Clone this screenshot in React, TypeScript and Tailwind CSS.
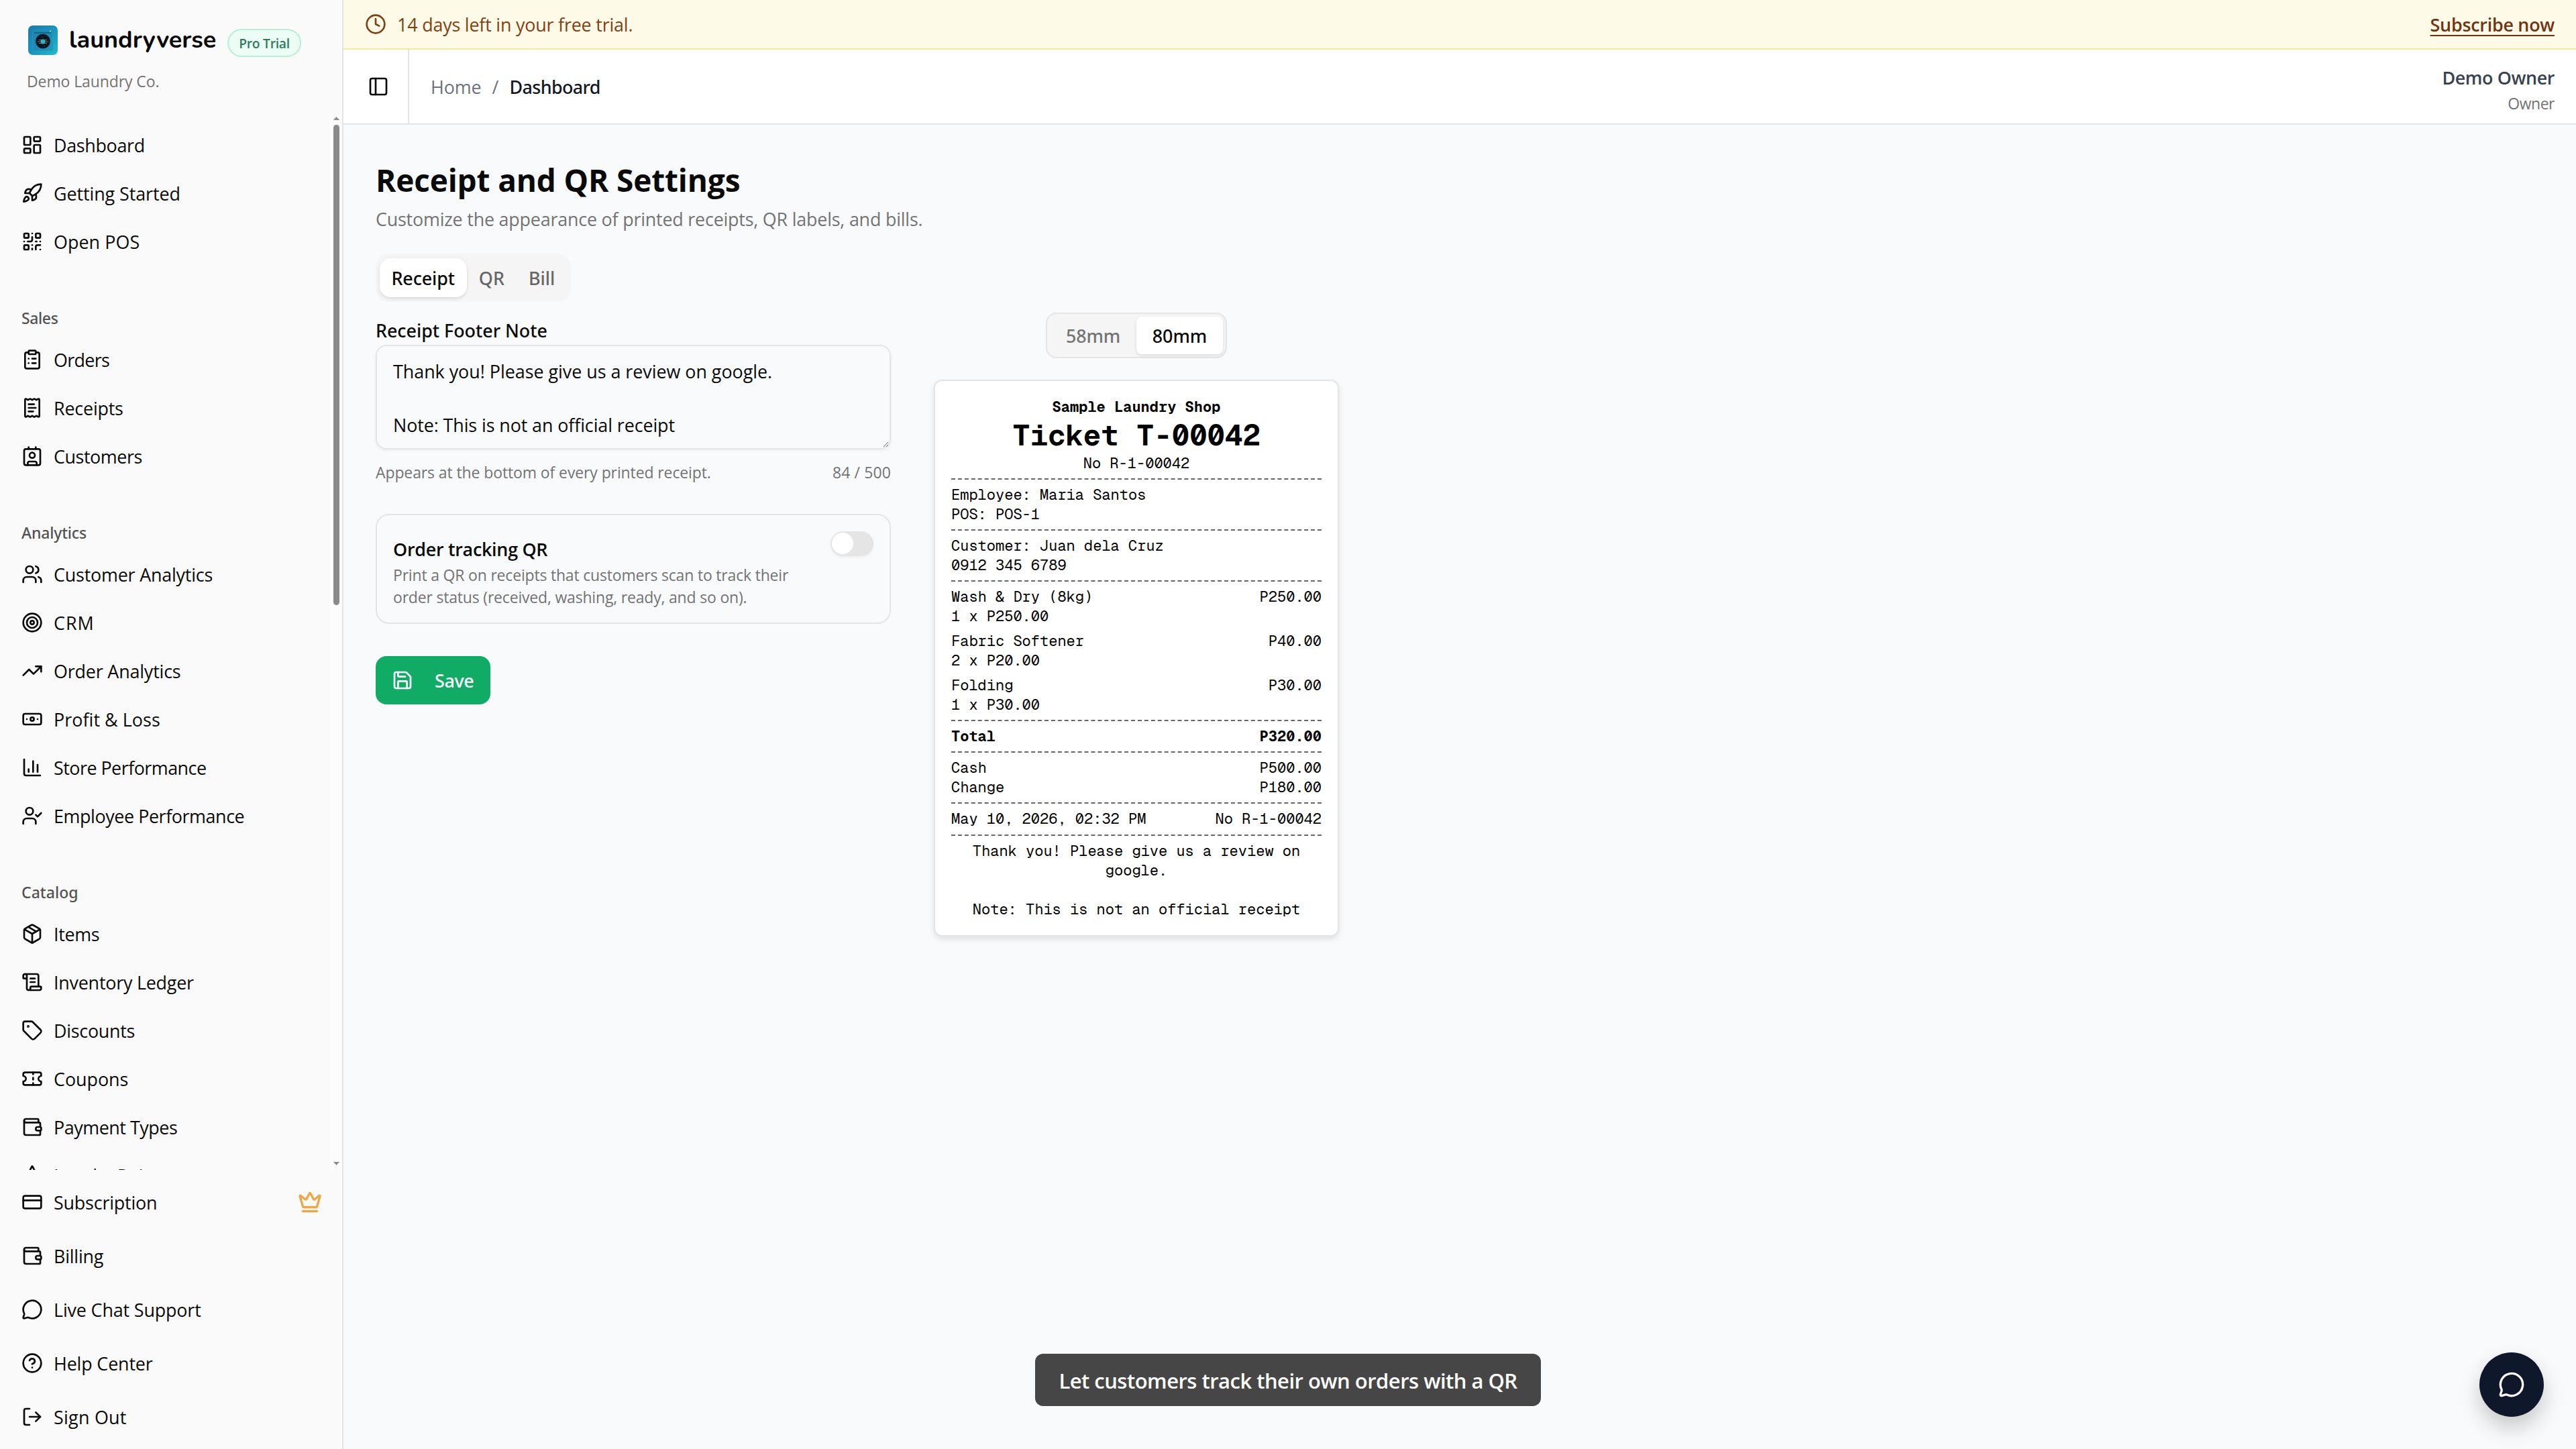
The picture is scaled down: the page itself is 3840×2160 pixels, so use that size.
import type { ReactNode } from "react";
import {
  Banknote,
  ChartColumn,
  CircleQuestionMark,
  ClipboardList,
  Clock,
  Contact,
  CreditCard,
  Crown,
  LayoutDashboard,
  LogOut,
  MessageCircle,
  Package,
  PanelLeft,
  QrCode,
  ReceiptText,
  Rocket,
  Save,
  ScrollText,
  Star,
  Tag,
  Target,
  Ticket,
  TrendingUp,
  UserCheck,
  Users,
  Wallet,
  type LucideIcon,
} from "lucide-react";

type Item = { icon: LucideIcon; label: string; tracking: string };
type Group = { title?: string; titleTracking?: string; items: Item[] };

const groups: Group[] = [
  {
    items: [
      { icon: LayoutDashboard, label: "Dashboard", tracking: "tracking-[-0.32px]" },
      { icon: Rocket, label: "Getting Started", tracking: "tracking-[-0.08px]" },
      { icon: QrCode, label: "Open POS", tracking: "tracking-[0.05px]" },
    ],
  },
  {
    title: "Sales",
    titleTracking: "tracking-[-0.39px]",
    items: [
      { icon: ClipboardList, label: "Orders", tracking: "tracking-[-0.68px]" },
      { icon: ReceiptText, label: "Receipts", tracking: "tracking-[-0.2px]" },
      { icon: Contact, label: "Customers", tracking: "tracking-[-0.43px]" },
    ],
  },
  {
    title: "Analytics",
    titleTracking: "tracking-[-0.17px]",
    items: [
      { icon: Users, label: "Customer Analytics", tracking: "tracking-[-0.2px]" },
      { icon: Target, label: "CRM", tracking: "tracking-[1px]" },
      { icon: TrendingUp, label: "Order Analytics", tracking: "tracking-[-0.18px]" },
      { icon: Banknote, label: "Profit & Loss", tracking: "tracking-[0.05px]" },
      { icon: ChartColumn, label: "Store Performance", tracking: "tracking-[-0.52px]" },
      { icon: UserCheck, label: "Employee Performance", tracking: "tracking-[-0.42px]" },
    ],
  },
  {
    title: "Catalog",
    titleTracking: "tracking-[0.04px]",
    items: [
      { icon: Package, label: "Items", tracking: "tracking-[-0.31px]" },
      { icon: ScrollText, label: "Inventory Ledger", tracking: "tracking-[-0.23px]" },
      { icon: Tag, label: "Discounts", tracking: "tracking-[-0.27px]" },
      { icon: Ticket, label: "Coupons", tracking: "tracking-[-0.03px]" },
      { icon: Wallet, label: "Payment Types", tracking: "tracking-[-0.46px]" },
      { icon: Star, label: "Loyalty Points", tracking: "tracking-[-0.1px]" },
    ],
  },
];

const footerItems: Item[] = [
  { icon: CreditCard, label: "Subscription", tracking: "tracking-[-0.2px]" },
  { icon: Wallet, label: "Billing", tracking: "tracking-[-0.21px]" },
  { icon: MessageCircle, label: "Live Chat Support", tracking: "tracking-[-0.15px]" },
  { icon: CircleQuestionMark, label: "Help Center", tracking: "tracking-[-0.16px]" },
  { icon: LogOut, label: "Sign Out", tracking: "tracking-[0.26px]" },
];

function NavLabel({ item }: { item: Item }) {
  const Icon = item.icon;
  return (
    <>
      <Icon className="size-8 shrink-0" strokeWidth={2} />
      <span className={`whitespace-nowrap pt-px text-[26.9px] leading-10 ${item.tracking}`}>{item.label}</span>
    </>
  );
}

function Logo() {
  return (
    <svg viewBox="0 0 44 44" className="size-11 shrink-0">
      <defs>
        <linearGradient id="logo-body" x1="0" y1="0" x2="1" y2="1">
          <stop offset="0" stopColor="#1b7ba6" />
          <stop offset="0.5" stopColor="#1a93bd" />
          <stop offset="1" stopColor="#22bccb" />
        </linearGradient>
      </defs>
      <rect width="44" height="44" rx="7" fill="url(#logo-body)" />
      <rect x="7" y="7" width="30" height="31" rx="2" fill="#2184ab" fillOpacity="0.5" stroke="#3aa5c6" strokeOpacity="0.5" />
      <path d="M9 11h25" stroke="#12668c" strokeWidth="2" />
      <circle cx="33" cy="8.5" r="0.9" fill="#d8e8a0" />
      <circle cx="22" cy="23.5" r="10.8" fill="#0b1526" />
      <path d="M13.5 24h17M16 21.5h12M16 26.5h12" stroke="#8d8a45" strokeWidth="0.9" />
      <circle cx="22" cy="24" r="3.4" fill="#25b4c9" />
      <circle cx="21" cy="17" r="0.5" fill="#5bc" />
      <circle cx="24" cy="31" r="0.5" fill="#5bc" />
    </svg>
  );
}

function Sidebar() {
  return (
    <aside className="flex w-[512px] shrink-0 flex-col border-r-2 border-[#e5e5e5] bg-[#fafafa] text-[#0a0a0a]">
      <div className="h-[172px] shrink-0 pl-[42px] pt-[38px]">
        <div className="flex h-11 items-center">
          <Logo />
          <span className="ml-[17px] w-[236px] whitespace-nowrap font-['Nunito','Open_Sans',sans-serif] text-[36px] leading-11 font-bold">
            laundryverse
          </span>
          <span className="mt-2 flex h-[42px] w-[110px] items-center justify-center rounded-full border-2 border-[#b5f0d3] bg-[#ecfdf5] pt-0.5 text-[19.2px] font-semibold tracking-[-0.23px] text-[#2a7d5c]">
            Pro Trial
          </span>
        </div>
        <p className="-ml-0.5 mt-[23px] text-[23px] leading-8 tracking-[-0.1px] text-[#737373]">Demo Laundry Co.</p>
      </div>

      <div className="flex min-h-0 flex-1">
        <nav className="min-w-0 flex-1 overflow-hidden pt-2">
          {groups.map((g, i) => (
            <div key={i}>
              {g.title && (
                <div
                  className={`mt-[52px] flex h-[52px] items-center pl-8 font-['Noto_Sans',sans-serif] text-[23px] font-medium text-[#525252] ${g.titleTracking}`}
                >
                  {g.title}
                </div>
              )}
              {g.items.map((it) => (
                <div key={it.label} className="flex h-[72px] items-center gap-4 pl-8">
                  <NavLabel item={it} />
                </div>
              ))}
            </div>
          ))}
        </nav>
        <div className="flex w-[18px] shrink-0 flex-col items-center bg-[#fcfcfc]">
          <svg viewBox="0 0 9 5" className="mt-0.5 h-[5px] w-[9px] shrink-0">
            <path d="M4.5 0 9 5H0z" fill="#8b8b8b" />
          </svg>
          <div className="mt-[7px] h-[716px] w-[9px] shrink-0 rounded-full bg-[#8b8b8b]" />
          <div className="flex-1" />
          <svg viewBox="0 0 9 5" className="mb-[7px] h-[5px] w-[9px] shrink-0">
            <path d="M0 0h9L4.5 5z" fill="#8b8b8b" />
          </svg>
        </div>
      </div>

      <div className="shrink-0 py-2">
        {footerItems.map((it, i) => (
          <div key={it.label} className="flex h-20 items-center gap-4 pl-8 pr-[30px]">
            <NavLabel item={it} />
            {i === 0 && <Crown className="ml-auto size-9 text-[#eba845]" strokeWidth={2.2} />}
          </div>
        ))}
      </div>
    </aside>
  );
}

function Banner() {
  return (
    <div className="flex h-[74px] shrink-0 items-center border-b-2 border-[#f8e796] bg-[#fdfbe8] px-8 text-[26.9px] text-[#843f10]">
      <Clock className="size-8" />
      <span className="ml-4 pt-px leading-10 tracking-[-0.2px]">14 days left in your free trial.</span>
      <span className="ml-auto pt-px leading-10 font-semibold tracking-[-0.26px] text-[#713310] underline decoration-2 underline-offset-[5px]">
        Subscribe now
      </span>
    </div>
  );
}

function Header() {
  return (
    <header className="flex h-28 shrink-0 border-b-2 border-[#e5e5e5] bg-white pr-8">
      <div className="flex w-[98px] items-center border-r-2 border-[#e5e5e5] pl-9">
        <PanelLeft className="size-8 text-[#0a0a0a]" />
      </div>
      <div className="flex items-center gap-4 pl-8 pt-0.5 text-[26.9px] leading-10 text-[#6b7280]">
        <span className="tracking-[-0.1px]">Home</span>
        <span>/</span>
        <span className="font-['Noto_Sans',sans-serif] font-medium tracking-[-0.64px] text-[#111827]">Dashboard</span>
      </div>
      <div className="ml-auto flex flex-col items-end pt-[22px]">
        <span className="text-[26.9px] leading-10 font-semibold tracking-[-0.4px] text-[#364153]">Demo Owner</span>
        <span className="text-[23px] leading-9 tracking-[-0.5px] text-[#737373]">Owner</span>
      </div>
    </header>
  );
}

const Dash = () => <div className="my-2 border-t-2 border-dashed border-[#666666]" />;

function Line({ left, right, bold }: { left: ReactNode; right?: ReactNode; bold?: boolean }) {
  return (
    <div className={bold ? "flex justify-between font-bold" : "flex justify-between"}>
      <span>{left}</span>
      <span>{right}</span>
    </div>
  );
}

const purchases = [
  { name: "Wash & Dry (8kg)", total: "P250.00", detail: "1 x P250.00" },
  { name: "Fabric Softener", total: "P40.00", detail: "2 x P20.00" },
  { name: "Folding", total: "P30.00", detail: "1 x P30.00" },
];

function Receipt() {
  return (
    <div className="mt-8 h-[830px] w-[604px] rounded-xl border-2 border-[#e5e5e5] bg-white p-6 font-['Geist_Mono','Liberation_Mono',monospace] text-[22px] leading-[29px] text-black shadow-[0_4px_8px_rgba(0,0,0,0.1)]">
      <div className="text-center">
        <div className="font-bold">Sample Laundry Shop</div>
        <div className="h-[55px] text-[44px] leading-[55px] font-bold">Ticket T-00042</div>
        <div>No R-1-00042</div>
      </div>
      <Dash />
      <Line left="Employee: Maria Santos" />
      <Line left="POS: POS-1" />
      <Dash />
      <Line left="Customer: Juan dela Cruz" />
      <Line left="0912 345 6789" />
      <Dash />
      <div className="flex flex-col gap-2">
        {purchases.map((p) => (
          <div key={p.name}>
            <Line left={p.name} right={p.total} />
            <Line left={p.detail} />
          </div>
        ))}
      </div>
      <Dash />
      <Line left="Total" right="P320.00" bold />
      <Dash />
      <Line left="Cash" right="P500.00" />
      <Line left="Change" right="P180.00" />
      <Dash />
      <Line left="May 10, 2026, 02:32 PM" right="No R-1-00042" />
      <div className="pt-px">
        <Dash />
      </div>
      <p className="whitespace-pre-line text-center">
        {"Thank you! Please give us a review on google.\n\nNote: This is not an official receipt"}
      </p>
    </div>
  );
}

function SettingsForm() {
  return (
    <div className="w-[768px] pt-[7px]">
      <div className="font-['Noto_Sans',sans-serif] text-[26.9px] leading-10 font-medium tracking-[-0.03px]">
        Receipt Footer Note
      </div>
      <div className="relative mt-px h-[156px] whitespace-pre-line rounded-2xl border-2 border-[#e5e5e5] px-6 pt-[18px] text-[26.9px] leading-10 shadow-[0_2px_4px_rgba(0,0,0,0.05)]">
        <span className="tracking-[-0.03px]">Thank you! Please give us a review on google.</span>
        {"\n\n"}
        <span className="tracking-[-0.1px]">Note: This is not an official receipt</span>
        <svg viewBox="0 0 10 10" className="absolute bottom-0 right-0 size-[10px]">
          <path d="M1 8 8 1M5 8l3-3" stroke="#555" strokeWidth="0.9" fill="none" />
        </svg>
      </div>
      <div className="mt-[18px] flex justify-between text-[23px] leading-8 text-[#737373]">
        <span className="tracking-[-0.11px]">Appears at the bottom of every printed receipt.</span>
        <span className="tracking-[0.1px]">84 / 500</span>
      </div>

      <div className="mt-[46px] flex h-[164px] justify-between rounded-[20px] border-2 border-[#e5e5e5] p-6">
        <div className="pt-[7px]">
          <div className="text-[26.9px] leading-10 font-semibold tracking-[-0.28px]">Order tracking QR</div>
          <p className="mt-0.5 whitespace-nowrap text-[23px] leading-[33px] tracking-[-0.19px] text-[#737373]">
            Print a QR on receipts that customers scan to track their
            <br />
            order status (received, washing, ready, and so on).
          </p>
        </div>
        <div className="h-[37px] w-16 shrink-0 rounded-full bg-[#e5e5e5] p-0.5 shadow-[0_2px_4px_rgba(0,0,0,0.05)]">
          <div className="size-8 rounded-full bg-white" />
        </div>
      </div>

      <button className="mt-12 flex h-[72px] w-[171px] items-center rounded-2xl bg-[#10ac66] pl-6 font-['Noto_Sans',sans-serif] text-[26.9px] font-medium tracking-[-0.34px] text-white">
        <Save className="size-8" />
        <span className="ml-8 pt-0.5">Save</span>
      </button>
    </div>
  );
}

function Preview() {
  return (
    <div className="flex flex-col items-center">
      <div className="flex h-[68px] rounded-2xl border-2 border-[#e5e5e5] bg-[#f5f5f5] p-1 font-['Noto_Sans',sans-serif] text-[26.9px] font-medium">
        <span className="flex w-[129px] items-center justify-center pt-0.5 tracking-[-0.17px] text-[#737373]">58mm</span>
        <span className="flex w-[129px] items-center justify-center rounded-lg bg-white pt-0.5 tracking-[-0.03px] shadow-[0_2px_5px_rgba(0,0,0,0.1)]">
          80mm
        </span>
      </div>
      <Receipt />
    </div>
  );
}

export default function App() {
  return (
    <div className="relative flex h-[2160px] w-[3840px] overflow-hidden bg-[#f8fafc] font-['Open_Sans',sans-serif] text-[#0a0a0a]">
      <Sidebar />
      <div className="flex min-w-0 flex-1 flex-col">
        <Banner />
        <Header />
        <main className="flex-1 pl-12 pt-[50px]">
          <h1 className="text-[46px] leading-16 font-bold tracking-[-0.16px]">Receipt and QR Settings</h1>
          <p className="mt-[7px] text-[26.9px] leading-10 tracking-[-0.21px] text-[#737373]">
            Customize the appearance of printed receipts, QR labels, and bills.
          </p>
          <div className="mt-[31px] flex h-[72px] w-[291px] items-center rounded-[20px] bg-[#f5f5f5] px-1.5 font-['Noto_Sans',sans-serif] text-[26.9px] font-medium text-[#666666]">
            <span className="flex h-[58px] w-[130px] items-center justify-center rounded-2xl bg-white pt-0.5 tracking-[-0.1px] text-[#0a0a0a] shadow-[0_2px_5px_rgba(0,0,0,0.12)]">
              Receipt
            </span>
            <span className="flex w-[75px] items-center justify-center pt-0.5">QR</span>
            <span className="flex w-[75px] items-center justify-center pt-0.5">Bill</span>
          </div>
          <div className="mt-4 flex items-start gap-16">
            <SettingsForm />
            <Preview />
          </div>
        </main>
      </div>

      <div className="absolute bottom-16 left-[1543px] flex h-[78px] w-[754px] items-center justify-center rounded-xl bg-[#464646] pt-0.5 text-[31px] font-semibold tracking-[-0.52px] text-white">
        Let customers track their own orders with a QR
      </div>

      <div className="absolute bottom-12 right-12 flex size-24 items-center justify-center rounded-full bg-[#0f172a] shadow-[0_16px_32px_rgba(0,0,0,0.2)]">
        <MessageCircle className="size-10 text-white" />
      </div>
    </div>
  );
}
